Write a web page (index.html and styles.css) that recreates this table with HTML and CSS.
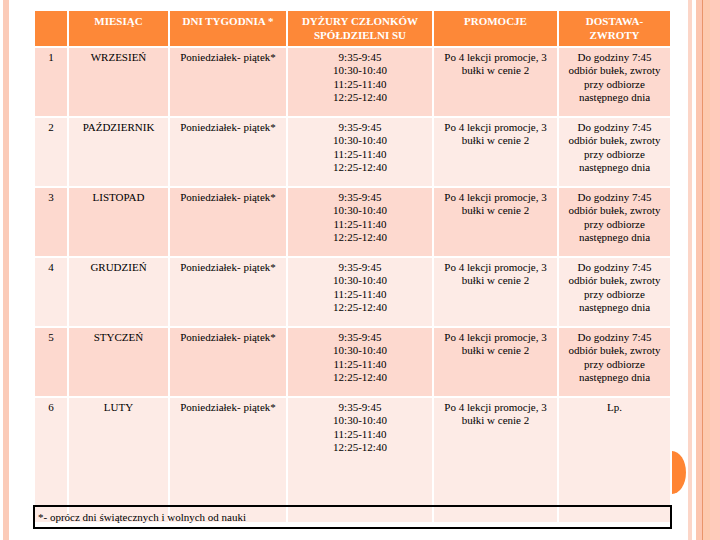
FILE: index.html
```html
<!DOCTYPE html>
<html lang="pl">
<head>
<meta charset="utf-8">
<title>Harmonogram</title>
<link rel="stylesheet" href="styles.css">
</head>
<body>
<div class="page">
  <div class="slide">
    <table class="grid">
      <colgroup>
        <col class="c1"><col class="c2"><col class="c3"><col class="c4"><col class="c5"><col class="c6">
      </colgroup>
      <thead>
        <tr>
          <th></th>
          <th>MIESIĄC</th>
          <th>DNI TYGODNIA *</th>
          <th>DYŻURY CZŁONKÓW<br>SPÓŁDZIELNI SU</th>
          <th>PROMOCJE</th>
          <th>DOSTAWA-<br>ZWROTY</th>
        </tr>
      </thead>
      <tbody>
        <tr class="odd">
          <td>1</td><td>WRZESIEŃ</td><td>Poniedziałek- piątek*</td>
          <td>9:35-9:45<br>10:30-10:40<br>11:25-11:40<br>12:25-12:40</td>
          <td>Po 4 lekcji promocje, 3<br>bułki w cenie 2</td>
          <td>Do godziny 7:45<br>odbiór bułek, zwroty<br>przy odbiorze<br>następnego dnia</td>
        </tr>
        <tr class="even">
          <td>2</td><td>PAŹDZIERNIK</td><td>Poniedziałek- piątek*</td>
          <td>9:35-9:45<br>10:30-10:40<br>11:25-11:40<br>12:25-12:40</td>
          <td>Po 4 lekcji promocje, 3<br>bułki w cenie 2</td>
          <td>Do godziny 7:45<br>odbiór bułek, zwroty<br>przy odbiorze<br>następnego dnia</td>
        </tr>
        <tr class="odd">
          <td>3</td><td>LISTOPAD</td><td>Poniedziałek- piątek*</td>
          <td>9:35-9:45<br>10:30-10:40<br>11:25-11:40<br>12:25-12:40</td>
          <td>Po 4 lekcji promocje, 3<br>bułki w cenie 2</td>
          <td>Do godziny 7:45<br>odbiór bułek, zwroty<br>przy odbiorze<br>następnego dnia</td>
        </tr>
        <tr class="even">
          <td>4</td><td>GRUDZIEŃ</td><td>Poniedziałek- piątek*</td>
          <td>9:35-9:45<br>10:30-10:40<br>11:25-11:40<br>12:25-12:40</td>
          <td>Po 4 lekcji promocje, 3<br>bułki w cenie 2</td>
          <td>Do godziny 7:45<br>odbiór bułek, zwroty<br>przy odbiorze<br>następnego dnia</td>
        </tr>
        <tr class="odd">
          <td>5</td><td>STYCZEŃ</td><td>Poniedziałek- piątek*</td>
          <td>9:35-9:45<br>10:30-10:40<br>11:25-11:40<br>12:25-12:40</td>
          <td>Po 4 lekcji promocje, 3<br>bułki w cenie 2</td>
          <td>Do godziny 7:45<br>odbiór bułek, zwroty<br>przy odbiorze<br>następnego dnia</td>
        </tr>
        <tr class="even last">
          <td>6</td><td>LUTY</td><td>Poniedziałek- piątek*</td>
          <td>9:35-9:45<br>10:30-10:40<br>11:25-11:40<br>12:25-12:40</td>
          <td>Po 4 lekcji promocje, 3<br>bułki w cenie 2</td>
          <td>Lp.</td>
        </tr>
      </tbody>
    </table>
    <div class="note">*- oprócz dni świątecznych i wolnych od nauki</div>
    <div class="dot"></div>
  </div>
</div>
</body>
</html>
```

FILE: styles.css
```css
html, body {
  margin: 0;
  padding: 0;
}
body {
  width: 720px;
  height: 540px;
  overflow: hidden;
  font-family: "Liberation Serif", "DejaVu Serif", serif;
  color: #000;
  background:
    linear-gradient(to right,
      #ffffff 0, #ffffff 3px,
      #fbcbb8 3px, #fbcbb8 9px,
      #ffffff 9px, #ffffff 688px,
      #fcd6c8 688px, #fcd6c8 692px,
      #ffffff 692px, #ffffff 696px,
      #fcc6b0 696px, #fcc6b0 702px,
      #e9956a 702px, #e9956a 703px,
      #fdcaae 703px, #fdcaae 710px,
      #ffcbbb 710px, #ffcbbb 720px);
}
.page {
  padding: 9px 0 0 33px;
}
.slide {
  position: relative;
  width: 639px;
}
.grid {
  width: 639px;
  border-collapse: separate;
  border-spacing: 2px;
  table-layout: fixed;
  font-family: "Liberation Serif", "DejaVu Serif", serif;
  font-size: 11px;
}
.c1 { width: 32px; }
.c2 { width: 99px; }
.c3 { width: 116px; }
.c4 { width: 144px; }
.c5 { width: 123px; }
.c6 { width: 111px; }
.grid th {
  font-family: "Liberation Serif", "DejaVu Serif", serif;
  background: #fd8838;
  color: #ffffff;
  font-weight: bold;
  font-size: 11px;
  line-height: 14px;
  height: 28px;
  padding: 3px 2px 4px;
  vertical-align: top;
  text-align: center;
}
.grid td {
  font-family: "Liberation Serif", "DejaVu Serif", serif;
  height: 62px;
  padding: 3px 2px 3px;
  line-height: 13.4px;
  vertical-align: top;
  text-align: center;
  white-space: nowrap;
}
.grid tr.odd td { background: #fdd9cf; }
.grid tr.even td { background: #fdebe6; }
.grid tr.last td { height: 118px; }
.note {
  position: absolute;
  left: 0;
  top: 496px;
  height: 20px;
  width: 632px;
  border: 2px solid #000;
  font-family: "Liberation Serif", "DejaVu Serif", serif;
  font-size: 11px;
  line-height: 20px;
  padding-left: 3px;
}
.dot {
  position: absolute;
  left: 639px;
  top: 442px;
  width: 14px;
  height: 43px;
  background: #ff8533;
  border-radius: 0 14px 14px 0 / 0 21.5px 21.5px 0;
}
```
